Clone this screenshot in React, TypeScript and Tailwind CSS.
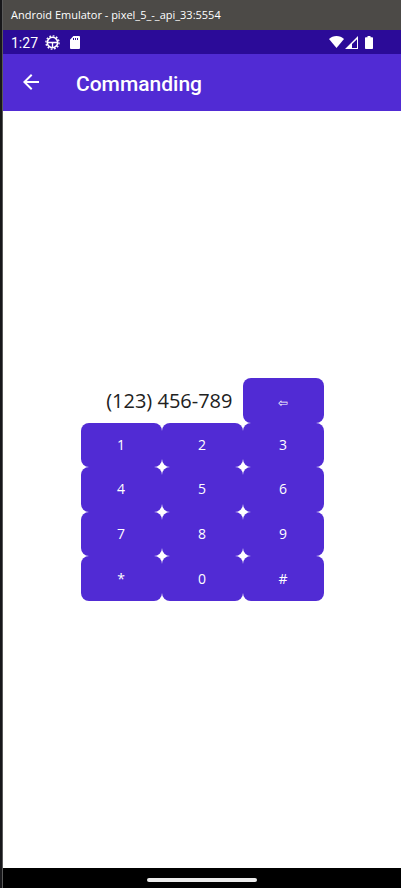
import { useState } from "react";

const KEYS = ["1", "2", "3", "4", "5", "6", "7", "8", "9", "*", "0", "#"];

function formatNumber(digits: string): string {
  if (/[*#]/.test(digits) || digits.length < 4 || digits.length > 10) {
    return digits;
  }
  if (digits.length < 8) {
    return `${digits.slice(0, 3)}-${digits.slice(3)}`;
  }
  return `(${digits.slice(0, 3)}) ${digits.slice(3, 6)}-${digits.slice(6)}`;
}

function GearIcon() {
  return (
    <svg className="size-[15px]" viewBox="0 0 15 15" fill="none" stroke="currentColor" aria-hidden="true">
      <circle cx="7.5" cy="7.5" r="5.2" strokeWidth="1.6" />
      <circle cx="7.5" cy="7.5" r="6.600" strokeWidth="1.300" strokeDasharray="1.800 1.656" />
      <path d="M2.500 7.500h10M7.500 7.500v5" strokeWidth="1.300" />
      <path d="M6 7.500 7.500 9 9 7.500z" fill="currentColor" stroke="none" />
    </svg>
  );
}

function SdCardIcon() {
  return (
    <svg className="h-[13px] w-[10px]" viewBox="0 0 10 13" aria-hidden="true">
      <path
        fill="currentColor"
        fillRule="evenodd"
        d="M3.4 0H9a1 1 0 0 1 1 1v11a1 1 0 0 1-1 1H1a1 1 0 0 1-1-1V3.8zM3 2v2h1V2zm2 0v2h1V2zm2 0v2h1V2z"
      />
    </svg>
  );
}

function WifiIcon() {
  return (
    <svg className="h-3 w-[15px]" viewBox="0 0 15 12" aria-hidden="true">
      <path fill="currentColor" d="M7.5 12 0 2.9C2 1 4.600 0 7.500 0S13 1 15 2.900z" />
    </svg>
  );
}

function SignalIcon() {
  return (
    <svg className="size-[13px]" viewBox="0 0 13 13" aria-hidden="true">
      <path fill="currentColor" fillRule="evenodd" d="M13 0v13H0zM12 3.200 7 8v4h5z" />
    </svg>
  );
}

function BatteryIcon() {
  return (
    <svg className="h-[13px] w-2" viewBox="0 0 8 13" aria-hidden="true">
      <path
        fill="currentColor"
        d="M2.500 0h3v1.200h1.700a.8.8 0 0 1 .8.8v10.200a.8.8 0 0 1-.8.8H.8a.8.8 0 0 1-.8-.8V2a.8.8 0 0 1 .8-.8h1.700z"
      />
    </svg>
  );
}

export default function App() {
  const [digits, setDigits] = useState("123456789");

  return (
    <div className="flex min-h-screen bg-white">
      <div className="w-[3px] shrink-0 border-r border-[#5a5a5a] bg-[#17171a]" />
      <div className="flex min-w-0 flex-1 flex-col">
        <div className="flex h-[30px] items-center bg-[#4c4a47] px-2 font-['Open_Sans','Noto_Sans',sans-serif] text-[11px] text-white">
          Android Emulator - pixel_5_-_api_33:5554
        </div>

        <div className="flex h-6 items-center justify-between bg-[#2b0b98] pr-7 pl-2 font-[Roboto,sans-serif] text-white">
          <div className="flex items-center">
            <span className="w-[34px] pt-[2px] text-sm leading-[22px]">1:27</span>
            <GearIcon />
            <span className="ml-[10px]">
              <SdCardIcon />
            </span>
          </div>
          <div className="flex items-center">
            <WifiIcon />
            <span className="ml-[1px]">
              <SignalIcon />
            </span>
            <span className="ml-[7px]">
              <BatteryIcon />
            </span>
          </div>
        </div>

        <header className="flex h-[57px] items-center bg-[#512bd4] px-4 text-white">
          <button type="button" aria-label="Back" className="flex size-6 items-center justify-center pb-[2px]">
            <svg className="size-6 shrink-0" viewBox="0 0 24 24" fill="currentColor" aria-hidden="true">
              <path d="M20 11H7.830l5.590-5.590L12 4l-8 8 8 8 1.410-1.410L7.830 13H20z" />
            </svg>
          </button>
          <h1 className="ml-[33px] pt-1 font-[Roboto,sans-serif] text-[21px] font-medium">Commanding</h1>
        </header>

        <main className="flex flex-1 items-center justify-center bg-white">
          <div className="grid h-[223px] grid-cols-[repeat(3,81px)] grid-rows-5 font-['Open_Sans','Noto_Sans',sans-serif] text-sm text-white">
            <output className="col-span-2 flex items-center justify-end pt-[2px] pr-[10px] text-xl text-[#212121]">
              {formatNumber(digits)}
            </output>
            <button
              type="button"
              aria-label="Backspace"
              className="rounded-lg bg-[#512bd4] pt-[6px] text-xs"
              onClick={() => setDigits(digits.slice(0, -1))}
            >
              ⇦
            </button>
            {KEYS.map((key) => (
              <button
                key={key}
                type="button"
                className="rounded-lg bg-[#512bd4]"
                onClick={() => setDigits(digits + key)}
              >
                {key}
              </button>
            ))}
          </div>
        </main>

        <div className="flex h-5 items-center justify-center bg-black pt-1">
          <div className="h-1 w-[110px] rounded-full bg-[#ececec]" />
        </div>
      </div>
    </div>
  );
}
